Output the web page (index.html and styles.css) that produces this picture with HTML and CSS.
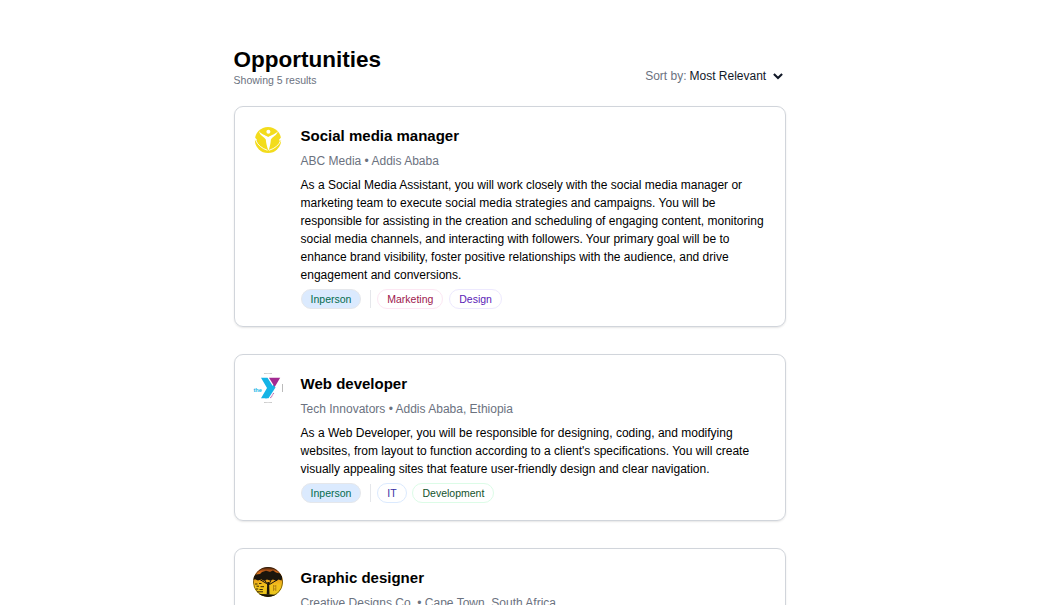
FILE: index.html
```html
<!DOCTYPE html>
<html lang="en">
<head>
<meta charset="utf-8">
<title>Opportunities</title>
<link rel="stylesheet" href="styles.css">
</head>
<body>
<main class="page">
  <header class="header">
    <div>
      <h1 class="heading">Opportunities</h1>
      <p class="count">Showing 5 results</p>
    </div>
    <div class="sort">
      <span class="sort-label">Sort by:</span>
      <span class="sort-value">Most Relevant</span>
      <svg class="chevron" viewBox="0 0 10 7" fill="none" stroke="#111827" stroke-width="2.1"><path d="M.9 1.1 5 5.1 9.1 1.1"/></svg>
    </div>
  </header>

  <article class="card">
    <svg class="avatar" viewBox="0 0 30 30">
      <circle cx="15" cy="15" r="13.1" fill="#f3dc1c"/>
      <circle cx="15.4" cy="6.8" r="2" fill="#fff"/>
      <path d="M6 6C8 9.5 12 9.8 15.2 12 18.5 9.8 22.5 9.5 25 6 24 10.5 19.5 11.5 17.9 14.5 17.5 19 16.7 22.5 15.5 25.5 14.2 22.5 13.2 19 12.8 14.5 11 11.5 6.5 10.5 6 6Z" fill="#fff"/>
      <path d="M2.8 15.5Q6 22.5 14.5 25.3M27.7 15.5Q25 22.5 16 25.3" fill="none" stroke="#fff" stroke-width=".9"/>
      <path d="M1 12.5 3.5 15.5M29 12.5 26.5 15.5" stroke="#fff" stroke-width="1.5"/>
    </svg>
    <div class="body">
      <h2 class="title">Social media manager</h2>
      <p class="company">ABC Media • Addis Ababa</p>
      <p class="description">As a Social Media Assistant, you will work closely with the social media manager or marketing team to execute social media strategies and campaigns. You will be responsible for assisting in the creation and scheduling of engaging content, monitoring social media channels, and interacting with followers. Your primary goal will be to enhance brand visibility, foster positive relationships with the audience, and drive engagement and conversions.</p>
      <div class="tags">
        <span class="tag tag-inperson">Inperson</span>
        <span class="divider"></span>
        <span class="tag tag-marketing">Marketing</span>
        <span class="tag tag-design">Design</span>
      </div>
    </div>
  </article>

  <article class="card">
    <svg class="avatar" viewBox="0 0 30 30">
      <path d="M11 .5Q15 -.2 19 .5M11 29.5Q15 30.2 19 29.5" fill="none" stroke="#bbb" stroke-width=".8"/>
      <path d="M29.5 11V19" stroke="#aaa" stroke-width=".8"/>
      <path d="M8 4.8H14.5L21 15 14 25.3H8L14 15Z" fill="#14b4e6"/>
      <path d="M14 21.5 20.5 11.5 22.5 14.5 15.5 25.3H12Z" fill="#14b4e6"/>
      <path d="M16 4.8H27.2L21.7 14Z" fill="#a32a92"/>
      <path d="m17.5 25 3.5-5.3" stroke="#b963ad" stroke-width="1.2" stroke-dasharray="1 .6"/>
      <text class="logo-text" x=".4" y="18.6">the</text>
    </svg>
    <div class="body">
      <h2 class="title">Web developer</h2>
      <p class="company">Tech Innovators • Addis Ababa, Ethiopia</p>
      <p class="description">As a Web Developer, you will be responsible for designing, coding, and modifying websites, from layout to function according to a client's specifications. You will create visually appealing sites that feature user-friendly design and clear navigation.</p>
      <div class="tags">
        <span class="tag tag-inperson">Inperson</span>
        <span class="divider"></span>
        <span class="tag tag-it">IT</span>
        <span class="tag tag-development">Development</span>
      </div>
    </div>
  </article>

  <article class="card">
    <svg class="avatar" viewBox="0 0 30 30">
      <defs>
        <linearGradient id="sunset" x1="0" y1="0" x2="0" y2="1">
          <stop offset="0" stop-color="#3a1a0a"/>
          <stop offset=".15" stop-color="#c9621a"/>
          <stop offset=".35" stop-color="#e8951c"/>
          <stop offset=".6" stop-color="#f2c01c"/>
          <stop offset="1" stop-color="#e8c81c"/>
        </linearGradient>
        <clipPath id="disc"><circle cx="15" cy="15" r="15"/></clipPath>
      </defs>
      <g clip-path="url(#disc)">
        <path d="M0 0H30V30H0Z" fill="url(#sunset)"/>
        <path d="M0 9.5 3 7.5 7 7 9 5 13 3.8 17 4.8 20 3.5 23 5.5 27 6.5 29.5 10 28.5 13.5 25.5 12.5 23.5 14 20 12.5 17 13.5 14 12.5 11 13.8 8 12.2 5 13.5 2 12.3 0 13Z" fill="#1b150c"/>
        <path d="M6 12 13.5 16.5M24 13 16.5 17.5M11 12 14.8 18M18.5 12 15.7 18" fill="none" stroke="#1b150c" stroke-width="1"/>
        <path d="M14.3 15H16.1L16.5 27.5H13.7Z" fill="#1b150c"/>
        <path d="M0 27.3Q8 26.6 15 27.3T30 27.3V30H0Z" fill="#1c1709"/>
        <path d="M2 17H4.5M6 16.5H8.5M3.5 19.2H6M7.5 19.7H11M3 22H5.2M6.5 22.5H9.8M4 24.8H10" stroke="#3b2c0c" stroke-width="1"/>
        <path d="M20.5 18V24M22.8 18V24M20.5 19H22.8M20.5 22H22.8" fill="none" stroke="#a87814" stroke-width=".8"/>
        <circle cx="15" cy="15" r="14.7" fill="none" stroke="#1c1709" stroke-width=".6"/>
      </g>
    </svg>
    <div class="body">
      <h2 class="title">Graphic designer</h2>
      <p class="company">Creative Designs Co. • Cape Town, South Africa</p>
    </div>
  </article>
</main>
</body>
</html>
```
FILE: styles.css
```css
* { box-sizing: border-box; margin: 0; }

body {
  height: 605px;
  overflow: hidden;
  background: #fff;
  color: #000;
  font-family: "Liberation Sans", Arial, sans-serif;
  font-size: 12px;
  line-height: 18px;
}

.page {
  width: 552px;
  margin-left: 233.6px;
  padding-top: 46px;
}

.header {
  display: flex;
  justify-content: space-between;
  align-items: flex-end;
  height: 42px;
  margin-bottom: 18px;
}

.heading { font-size: 22.5px; line-height: 27px; }

.count { font-size: 10.5px; line-height: 15px; color: #6b7280; }

.sort {
  display: flex;
  align-items: center;
  gap: 3px;
  padding: 0 2.4px 3px 0;
}

.sort-label { color: #6b7280; }

.sort-value { color: #111827; }

.chevron { width: 10px; height: 7px; margin-left: 4px; }

.card {
  display: flex;
  align-items: flex-start;
  gap: 18px;
  margin-bottom: 27px;
  padding: 18px 18px 17px;
  border: 1px solid #d1d5db;
  border-radius: 9px;
  box-shadow: 0 1px 2px rgba(0, 0, 0, .1);
}

.avatar { flex: none; width: 30px; height: 30px; }

.logo-text {
  font: bold 5.6px "Liberation Sans", Arial, sans-serif;
  fill: #14b4e6;
}

.body { flex: 1; min-width: 0; }

.title { font-size: 15px; line-height: 21px; }

.company { margin-top: 6px; color: #6b7280; }

.description { margin-top: 6px; }

.tags {
  display: flex;
  align-items: center;
  gap: 5.9px;
  margin-top: 5px;
  height: 20px;
}

.tag {
  height: 20px;
  padding: 0 9px;
  border: 1px solid;
  border-radius: 10px;
  font-size: 10.5px;
  line-height: 18px;
}

.tag-inperson { border-color: #e5e7eb; background: #dbeafe; color: #046c4e; }

.tag-marketing { border-color: #fce7f3; color: #9d174d; }

.tag-design { border-color: #ede9fe; color: #5b21b6; }

.tag-it { border-color: #dbeafe; color: #3730a3; }

.tag-development { border-color: #dcfce7; color: #14532d; }

.divider { width: 1px; height: 18px; margin-left: 3px; background: #e5e7eb; }
```
